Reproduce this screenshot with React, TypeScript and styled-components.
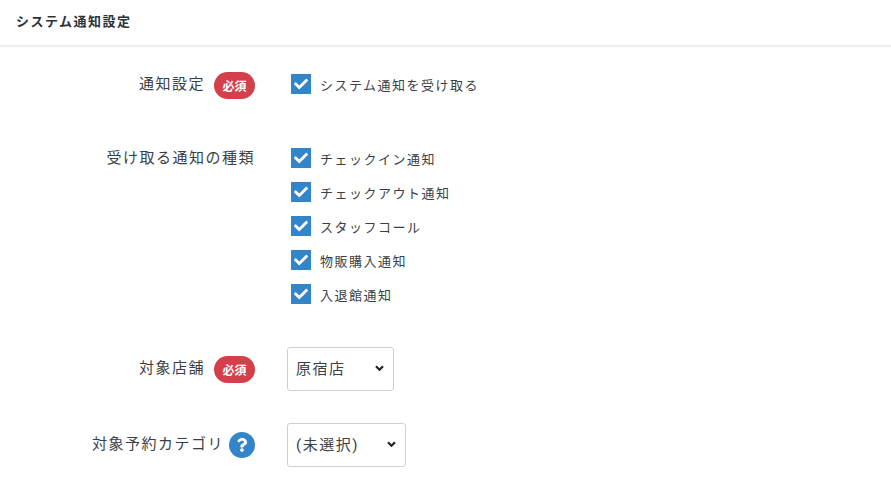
import styled, { createGlobalStyle } from "styled-components";
import { FaCheck, FaQuestion } from "react-icons/fa";

const GlobalStyle = createGlobalStyle`
    html, body {
        margin: 0;
        padding: 0;
        background: #fff;
        color: #333;
        font-family: "Roboto", "Noto Sans CJK JP", sans-serif;
    }
`;

const Header = styled.header`
    display: flex;
    align-items: center;
    box-sizing: border-box;
    height: 47px;
    padding-left: 16px;
    padding-bottom: 4px;
    border-bottom: 2px solid #eeeeee;
    font-size: 13px;
    font-weight: 700;
    letter-spacing: 1.5px;
    color: #2d3238;
`;

const Form = styled.div`
    display: flex;
    flex-direction: column;
    padding-top: 27px;
`;

const Row = styled.div<{ $bottom: number }>`
    display: grid;
    grid-template-columns: 255px 1fr;
    column-gap: 32px;
    margin-bottom: ${(p) => p.$bottom}px;
`;

const LabelCell = styled.div<{ $top: number }>`
    display: flex;
    justify-content: flex-end;
    align-items: center;
    gap: 9px;
    height: 26px;
    margin-top: ${(p) => p.$top}px;
    font-size: 15px;
    letter-spacing: 1.5px;
    color: #3a3f45;
`;

const LabelText = styled.span`
    margin-bottom: 5px;
`;

const Required = styled.span`
    display: inline-flex;
    align-items: center;
    justify-content: center;
    width: 41px;
    height: 27px;
    border-radius: 14px;
    background: #d53f4c;
    color: #fff;
    font-size: 12px;
    font-weight: 700;
    letter-spacing: 0;
`;

const HelpIcon = styled.span`
    display: inline-flex;
    align-items: center;
    justify-content: center;
    width: 26px;
    height: 26px;
    border-radius: 50%;
    background: #3385c9;
    color: #fff;
    font-size: 14px;
    margin-left: -4px;
`;

const CheckList = styled.div`
    display: flex;
    flex-direction: column;
    gap: 14px;
    padding-left: 4px;
`;

const CheckRow = styled.label`
    display: flex;
    align-items: center;
    gap: 9px;
    height: 20px;
    font-size: 13px;
    letter-spacing: 1.5px;
    color: #3a3f45;
`;

const CheckBox = styled.span`
    display: flex;
    align-items: center;
    justify-content: center;
    width: 20px;
    height: 20px;
    background: #3385c9;
    color: #fff;
    font-size: 14px;
`;

const SelectWrap = styled.div<{ $width: number }>`
    position: relative;
    width: ${(p) => p.$width}px;
`;

const Select = styled.select`
    display: block;
    width: 100%;
    height: 44px;
    padding: 0 0 0 8px;
    appearance: none;
    background: #fff;
    border: 1px solid #cbd0d5;
    border-radius: 3px;
    font-family: inherit;
    font-size: 15px;
    letter-spacing: 1.5px;
    color: #3a3f45;
`;

const Chevron = styled.svg`
    position: absolute;
    right: 9px;
    top: 17px;
    width: 11px;
    height: 9px;
    pointer-events: none;
`;

function SelectArrow() {
    return (
        <Chevron viewBox="0 0 11 9">
            <path d="M2 2.2l3.5 3.5L9 2.2" fill="none" stroke="#222" strokeWidth="2.2" />
        </Chevron>
    );
}

function Check({ children }: { children: string }) {
    return (
        <CheckRow>
            <CheckBox>
                <FaCheck />
            </CheckBox>
            <span>{children}</span>
        </CheckRow>
    );
}

export default function App() {
    return (
        <>
            <GlobalStyle />
            <Header>システム通知設定</Header>
            <Form>
                <Row $bottom={50}>
                    <LabelCell $top={-2}>
                        <LabelText>通知設定</LabelText>
                        <Required>必須</Required>
                    </LabelCell>
                    <CheckList>
                        <Check>システム通知を受け取る</Check>
                    </CheckList>
                </Row>
                <Row $bottom={43}>
                    <LabelCell $top={-2}>
                        <LabelText>受け取る通知の種類</LabelText>
                    </LabelCell>
                    <CheckList>
                        <Check>チェックイン通知</Check>
                        <Check>チェックアウト通知</Check>
                        <Check>スタッフコール</Check>
                        <Check>物販購入通知</Check>
                        <Check>入退館通知</Check>
                    </CheckList>
                </Row>
                <Row $bottom={32}>
                    <LabelCell $top={9}>
                        <LabelText>対象店舗</LabelText>
                        <Required>必須</Required>
                    </LabelCell>
                    <SelectWrap $width={107}>
                        <Select defaultValue="原宿店">
                            <option>原宿店</option>
                        </Select>
                        <SelectArrow />
                    </SelectWrap>
                </Row>
                <Row $bottom={0}>
                    <LabelCell $top={9}>
                        <LabelText>対象予約カテゴリ</LabelText>
                        <HelpIcon>
                            <FaQuestion />
                        </HelpIcon>
                    </LabelCell>
                    <SelectWrap $width={119}>
                        <Select defaultValue="(未選択)">
                            <option>(未選択)</option>
                        </Select>
                        <SelectArrow />
                    </SelectWrap>
                </Row>
            </Form>
        </>
    );
}
